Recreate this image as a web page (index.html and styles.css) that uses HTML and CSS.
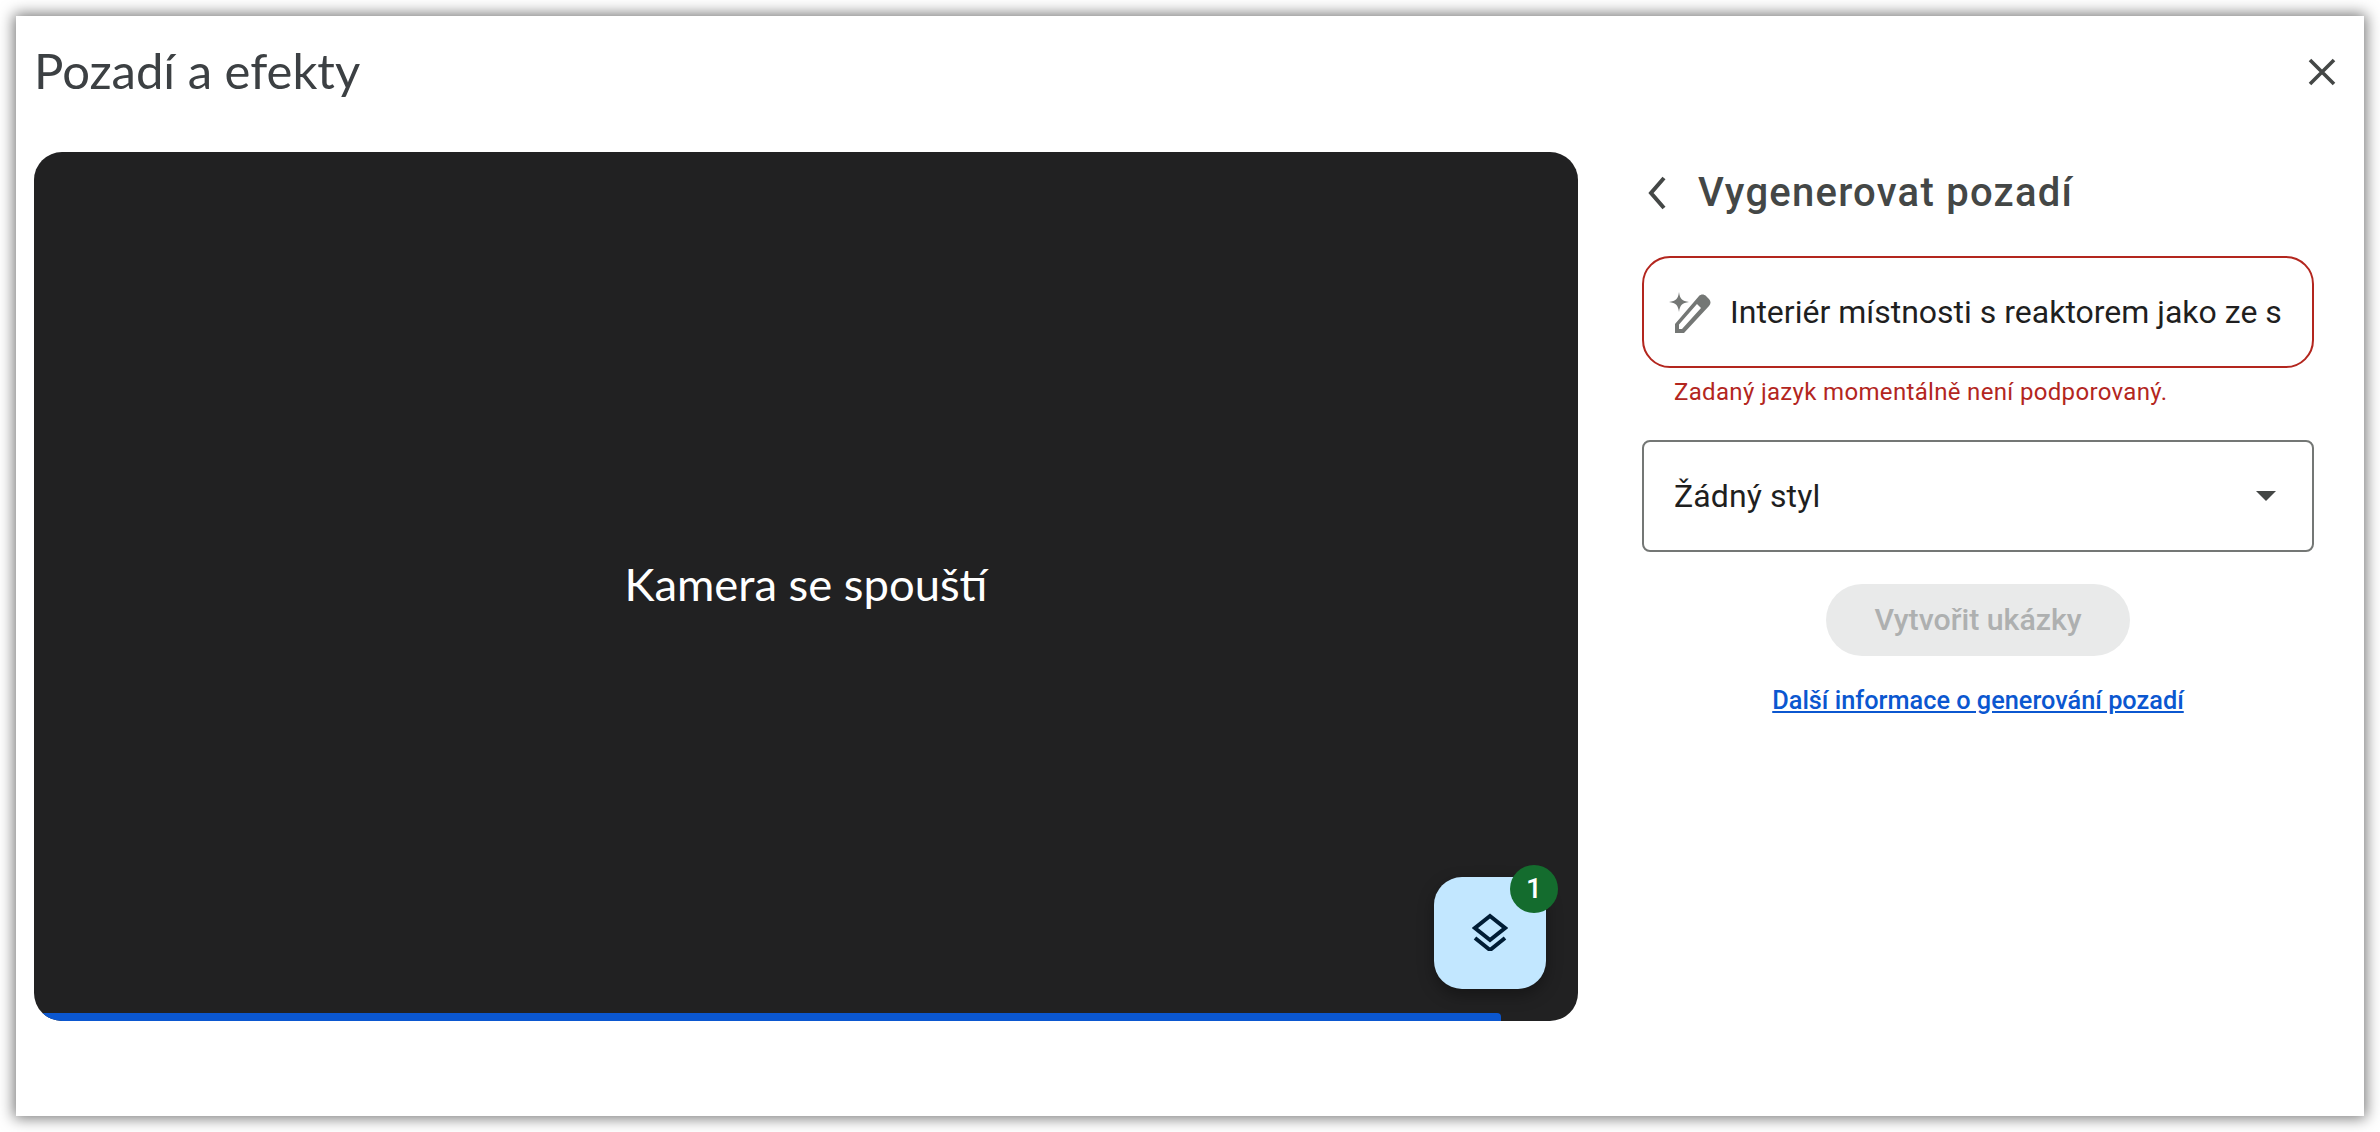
FILE: index.html
```html
<!DOCTYPE html>
<html lang="cs">
<head>
<meta charset="utf-8">
<title>Pozadí a efekty</title>
<link rel="stylesheet" href="styles.css">
</head>
<body>
<div class="dialog">
  <header class="head">
    <h1 class="title">Pozadí a efekty</h1>
    <svg class="close" viewBox="0 0 28 28" aria-label="Zavřít"><path d="M2 2 26 26M26 2 2 26"/></svg>
  </header>
  <main class="body">
    <section class="stage">
      <p class="status">Kamera se spouští</p>
      <div class="progress"></div>
      <button class="fab" aria-label="Efekty">
        <svg class="layers" viewBox="0 0 36 38"><path d="M18 3 33 15 18 27 3 15Z"/><path d="M3 25 18 37 33 25"/></svg>
        <span class="badge">1</span>
      </button>
    </section>
    <aside class="side">
      <div class="side-head">
        <svg class="back" viewBox="0 0 18 34" aria-label="Zpět"><path d="M16 2 3 17 16 32"/></svg>
        <h2 class="side-title">Vygenerovat pozadí</h2>
      </div>
      <div class="prompt">
        <svg class="pen" viewBox="0 0 44 44"><path class="spark" d="M11 2C12 9 14 11 21 12 14 13 12 15 11 22 10 15 8 13 1 12 8 11 10 9 11 2Z"/><path class="pen-body" d="M7 43V34L31 6C33 4 36 4 38 6L41 9C43 11 43 14 41 16L16 43ZM11 39H14L33 18 29 14 11 34.500Z"/></svg>
        <span class="prompt-text">Interiér místnosti s reaktorem jako ze s</span>
      </div>
      <p class="error">Zadaný jazyk momentálně není podporovaný.</p>
      <div class="select">
        <span>Žádný styl</span>
        <span class="caret"></span>
      </div>
      <button class="create" disabled>Vytvořit ukázky</button>
      <a class="more" href="#">Další informace o generování pozadí</a>
    </aside>
  </main>
</div>
</body>
</html>
```

FILE: styles.css
```css
* { box-sizing: border-box; }
html, body { height: 100%; }
body {
  margin: 0;
  padding: 16px;
  background: #fff;
  font-family: Roboto, "Noto Sans", sans-serif;
  overflow: hidden;
}
.dialog {
  height: 1100px;
  background: #fff;
  box-shadow: 0 0 14px 2px rgba(0,0,0,.55);
  padding: 0 28px 0 18px;
  display: flex;
  flex-direction: column;
}
.head {
  height: 136px;
  display: flex;
  justify-content: space-between;
  align-items: flex-start;
}
.title {
  margin: 26px 0 0;
  font: 400 49px/56px Lato, sans-serif;
  color: #3c4043;
}
.close {
  width: 28px;
  height: 28px;
  margin-top: 42px;
  fill: none;
  stroke: #444746;
  stroke-width: 3.6;
}
.body { display: flex; }
.stage {
  position: relative;
  width: 1544px;
  height: 869px;
  background: #212122;
  border-radius: 28px;
  overflow: hidden;
  display: flex;
  align-items: center;
  justify-content: center;
}
.status {
  margin: 0 0 6px;
  color: #fff;
  font: 400 45.400px/56px Lato, sans-serif;
}
.progress {
  position: absolute;
  left: 0;
  bottom: 0;
  width: 1467px;
  height: 8px;
  background: #0b57d0;
  border-radius: 0 4px 0 0;
}
.fab {
  position: absolute;
  left: 1400px;
  top: 725px;
  width: 112px;
  height: 112px;
  border: 0;
  border-radius: 28px;
  background: #c2e7ff;
  box-shadow: 0 6px 16px rgba(0,0,0,.35);
  display: flex;
  align-items: center;
  justify-content: center;
  padding: 0 0 2px;
}
.layers {
  width: 36px;
  height: 38px;
  fill: none;
  stroke: #001d35;
  stroke-width: 4;
}
.badge {
  position: absolute;
  top: -12px;
  right: -12px;
  width: 48px;
  height: 48px;
  border-radius: 50%;
  background: #146c2e;
  color: #fff;
  font: 500 28px/48px Roboto, sans-serif;
  text-align: center;
}
.side {
  width: 672px;
  margin-left: 64px;
  display: flex;
  flex-direction: column;
  align-items: stretch;
}
.side-head {
  display: flex;
  align-items: center;
  height: 56px;
  margin-top: 13px;
  padding-left: 6px;
}
.back {
  width: 18px;
  height: 34px;
  fill: none;
  stroke: #444746;
  stroke-width: 4;
}
.side-title {
  margin: 0 0 0 32px;
  font: 500 40px/56px Roboto, sans-serif;
  letter-spacing: 1.25px;
  color: #444746;
}
.prompt {
  margin-top: 35px;
  height: 112px;
  border: 2px solid #b3261e;
  border-radius: 28px;
  display: flex;
  align-items: center;
  padding-left: 24px;
}
.pen { width: 44px; height: 44px; }
.spark, .pen-body { fill: #747775; fill-rule: evenodd; }
.prompt-text {
  margin-left: 18px;
  font-size: 32px;
  color: #1f1f1f;
  white-space: nowrap;
}
.error {
  margin: 8px 0 0 32px;
  font-size: 24px;
  letter-spacing: .33px;
  line-height: 32px;
  color: #b3261e;
}
.select {
  margin-top: 32px;
  height: 112px;
  border: 2px solid #747775;
  border-radius: 8px;
  padding: 0 36px 0 30px;
  display: flex;
  align-items: center;
  justify-content: space-between;
  font-size: 32px;
  letter-spacing: .1px;
  color: #1f1f1f;
}
.caret {
  width: 0;
  height: 0;
  border-left: 10px solid transparent;
  border-right: 10px solid transparent;
  border-top: 10px solid #444746;
}
.create {
  align-self: center;
  margin-top: 32px;
  width: 304px;
  height: 72px;
  border: 0;
  border-radius: 36px;
  background: #e9eaea;
  color: #aeb0b0;
  font: 500 30.300px Roboto, sans-serif;
  padding: 0 0 2px;
}
.more {
  align-self: center;
  margin-top: 29px;
  font-size: 25.300px;
  line-height: 32px;
  font-weight: 500;
  color: #0b57d0;
}
```
